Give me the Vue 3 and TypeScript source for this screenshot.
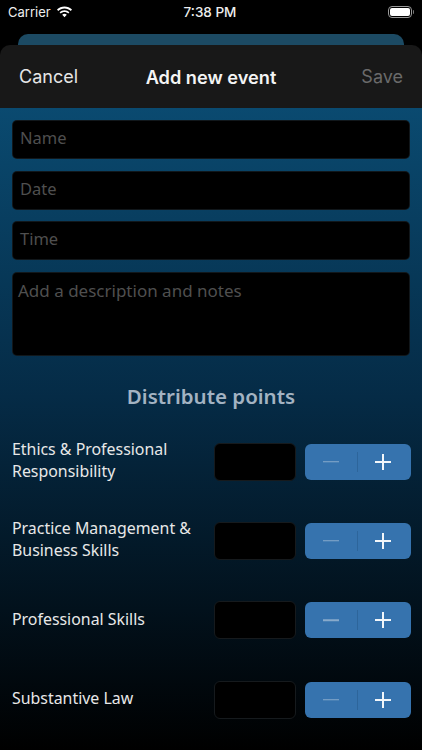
<script setup lang="ts">
const fields: string[] = ['Name', 'Date', 'Time']
const rows: string[] = [
  'Ethics & Professional Responsibility',
  'Practice Management & Business Skills',
  'Professional Skills',
  'Substantive Law',
]
</script>

<template>
  <div class="screen">
    <header class="status">
      <div class="status-left">
        <span>Carrier</span>
        <svg class="wifi" width="17" height="12" viewBox="0 0 17 12">
          <path d="M8.5 2.4c2.4 0 4.6.9 6.3 2.5l1.2-1.3C14 1.6 11.4.5 8.5.5S3 1.6 1 3.6l1.2 1.3C3.9 3.3 6.1 2.4 8.5 2.4z" fill="#fff"/>
          <path d="M8.5 6c1.4 0 2.7.5 3.7 1.5l1.2-1.3C12.1 4.9 10.4 4.2 8.5 4.2s-3.6.7-4.9 2l1.2 1.3C5.8 6.5 7.1 6 8.5 6z" fill="#fff"/>
          <path d="M8.5 7.8c-.9 0-1.7.3-2.3.9l2.3 2.6 2.3-2.6c-.6-.6-1.4-.9-2.3-.9z" fill="#fff"/>
        </svg>
      </div>
      <span class="clock">7:38 PM</span>
      <div class="battery"><i class="battery-level"></i></div>
    </header>
    <div class="back-card"></div>
    <main class="sheet">
      <nav class="nav">
        <span class="cancel">Cancel</span>
        <strong class="title">Add new event</strong>
        <span class="save">Save</span>
      </nav>
      <section class="content">
        <div class="fields">
          <div v-for="f in fields" :key="f" class="field">{{ f }}</div>
          <div class="field notes">Add a description and notes</div>
        </div>
        <h2 class="heading">Distribute points</h2>
        <div class="rows">
          <div v-for="r in rows" :key="r" class="row">
            <div class="label">{{ r }}</div>
            <div class="value"></div>
            <div class="stepper">
              <span class="step minus"><i class="bar"></i></span>
              <span class="divider"></span>
              <span class="step plus"><i class="bar"></i><i class="bar vertical"></i></span>
            </div>
          </div>
        </div>
      </section>
    </main>
  </div>
</template>

<style>
html, body { margin: 0; background: #000; }
</style>

<style scoped>
.screen {
  width: 422px;
  height: 750px;
  overflow: hidden;
  position: relative;
  background: #000;
  font-family: "Noto Sans", "Open Sans", sans-serif;
  color: #fff;
  display: flex;
  flex-direction: column;
}
.status {
  height: 24px;
  flex: none;
  display: grid;
  grid-template-columns: 1fr auto 1fr;
  align-items: center;
  padding: 0 8px;
  font-family: Inter, sans-serif;
  font-size: 13px;
  color: #eee;
}
.status-left { display: flex; align-items: center; gap: 5px; }
.wifi { margin-top: -1px; }
.clock { font-weight: 500; font-size: 13.5px; margin-left: -2px; }
.battery {
  justify-self: end;
  width: 24px;
  height: 12px;
  border: 1px solid #999;
  border-radius: 4px;
  padding: 1px;
  margin-right: 2px;
  box-sizing: border-box;
  position: relative;
}
.battery::after {
  content: "";
  position: absolute;
  right: -3px;
  top: 3px;
  width: 1.5px;
  height: 4px;
  background: #777;
  border-radius: 0 1px 1px 0;
}
.battery-level {
  display: block;
  height: 100%;
  background: #fff;
  border-radius: 2px;
}
.back-card {
  flex: none;
  height: 11px;
  margin: 10px 18px 0;
  background: #1c4a63;
  border-radius: 10px 10px 0 0;
}
.sheet {
  flex: 1;
  display: flex;
  flex-direction: column;
  border-radius: 10px 10px 0 0;
  overflow: hidden;
  min-height: 0;
}
.nav {
  flex: none;
  height: 63px;
  background: #181818;
  display: grid;
  grid-template-columns: 1fr auto 1fr;
  align-items: center;
  padding: 0 19px;
  font-family: Inter, sans-serif;
  font-size: 18px;
}
.cancel { color: #e6e6e6; }
.title { font-weight: 600; color: #f4f4f4; font-size: 18.2px; }
.save { justify-self: end; color: #6a6a6a; }
.content {
  flex: 1;
  background: linear-gradient(180deg, #0a4a70 0%, #052b46 45%, #000 100%);
  padding: 12px 12px 0;
}
.fields { display: flex; flex-direction: column; gap: 11.7px; }
.field {
  height: 39px;
  box-sizing: border-box;
  padding: 0 7px;
  background: #000;
  border-radius: 5px;
  border: 1px solid rgba(120, 160, 190, 0.14);
  color: #4f4f4f;
  font-size: 16.5px;
  line-height: 34px;
}
.notes { height: 84px; padding: 0 5px; font-size: 17px; line-height: 35px; }
.heading {
  margin: 25.5px 0 0;
  text-align: center;
  font-size: 20.5px;
  font-weight: 600;
  line-height: 28px;
  color: #a3b3c2;
}
.rows { margin-top: 33px; display: flex; flex-direction: column; gap: 41.4px; }
.row { display: flex; align-items: center; height: 38px; }
.label {
  flex: none;
  width: 200px;
  margin-top: -2px;
  font-size: 15.9px;
  line-height: 21.5px;
  color: #e8e8e8;
}
.value {
  flex: none;
  width: 82px;
  height: 38px;
  box-sizing: border-box;
  margin-left: 2px;
  background: #000;
  border: 1px solid #161a1d;
  border-radius: 6px;
}
.stepper {
  flex: none;
  width: 106px;
  height: 36px;
  margin-left: 9px;
  background: #3673ae;
  border-radius: 6px;
  display: flex;
  align-items: center;
}
.step {
  height: 100%;
  position: relative;
}
.minus { width: 52px; }
.plus { width: 50px; }
.bar {
  position: absolute;
  left: 50%;
  top: 50%;
  width: 16px;
  height: 2px;
  transform: translate(-50%, -50%);
  background: #f2f6fa;
}
.minus .bar { background: #88aacb; height: 1.5px; }
.vertical { width: 2px; height: 16px; }
.divider { width: 1px; height: 20px; background: rgba(20, 60, 100, 0.25); }
</style>
